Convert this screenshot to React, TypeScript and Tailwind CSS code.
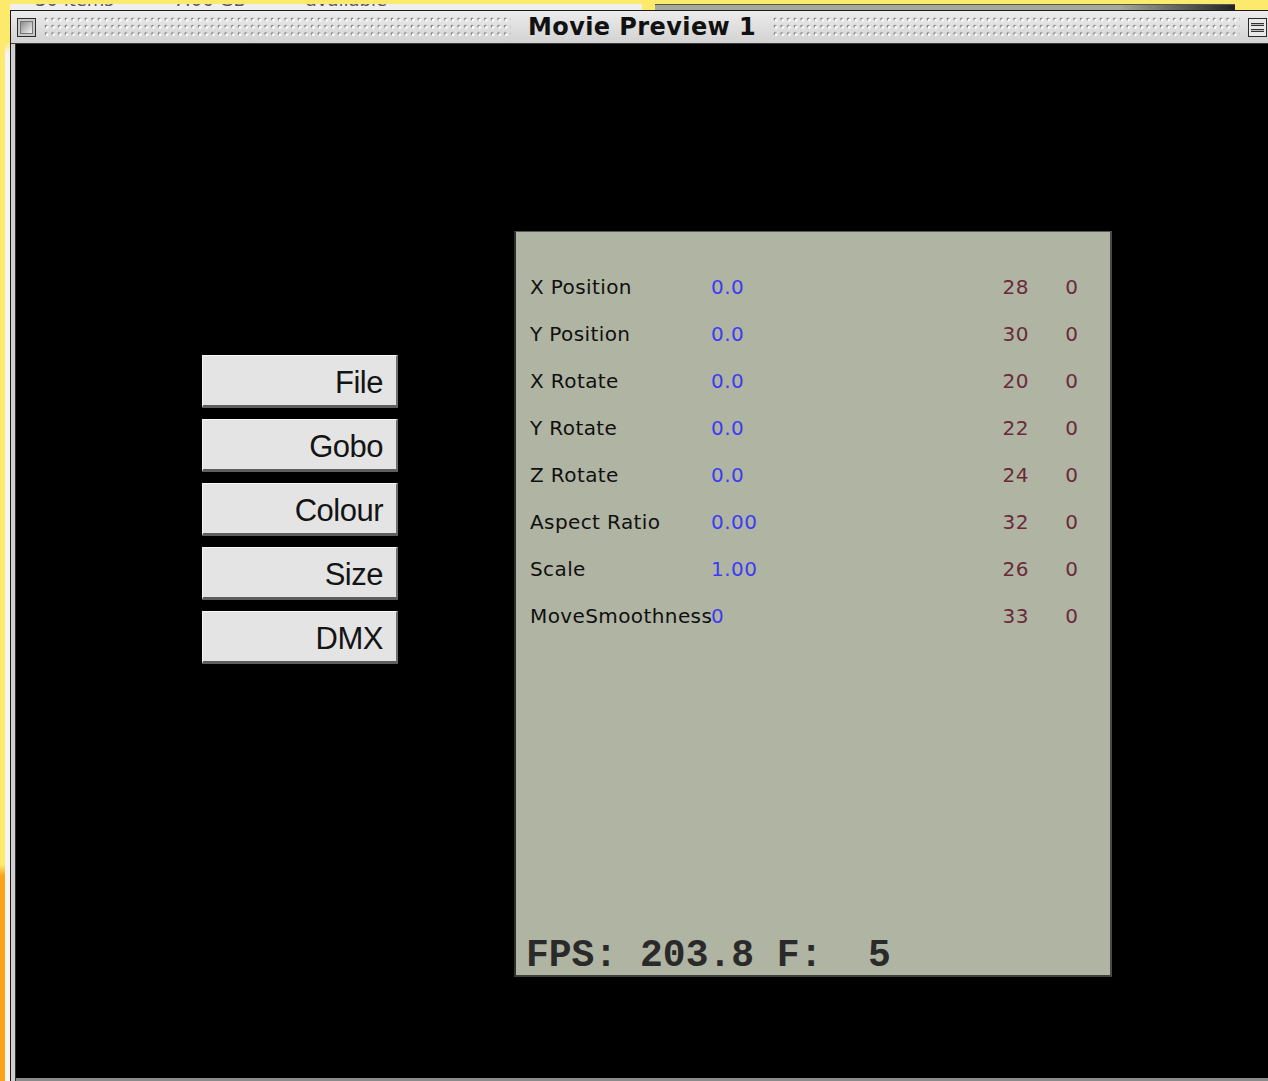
const params = [
  { label: "X Position", value: "0.0", channel: "28", level: "0" },
  { label: "Y Position", value: "0.0", channel: "30", level: "0" },
  { label: "X Rotate", value: "0.0", channel: "20", level: "0" },
  { label: "Y Rotate", value: "0.0", channel: "22", level: "0" },
  { label: "Z Rotate", value: "0.0", channel: "24", level: "0" },
  { label: "Aspect Ratio", value: "0.00", channel: "32", level: "0" },
  { label: "Scale", value: "1.00", channel: "26", level: "0" },
  { label: "MoveSmoothness", value: "0", channel: "33", level: "0" },
];

const menu = ["File", "Gobo", "Colour", "Size", "DMX"];

function Stripes() {
  return (
    <div className="flex-1 h-[21px] bg-[radial-gradient(circle_at_3px_3px,#ffffff_1.1px,transparent_1.7px),radial-gradient(circle_at_2px_2px,#7a7a7a_1.1px,transparent_1.7px)] bg-[length:6.67px_7.3px]" />
  );
}

function CloseBox() {
  return (
    <div className="w-[19px] h-[19px] border border-[#2a2a2a] bg-[#c8c8c8] p-[2px]">
      <div className="w-full h-full border border-[#777] bg-[linear-gradient(135deg,#8c8c8c,#f2f2f2)]" />
    </div>
  );
}

function ShadeBox() {
  return (
    <div className="w-[19px] h-[19px] border border-[#2a2a2a] bg-[#e8e8e8] flex flex-col justify-center gap-[3px] px-[2px]">
      <div className="h-[3px] border-y border-[#333] bg-[#bbb]" />
      <div className="h-[3px] border-y border-[#333] bg-[#bbb]" />
    </div>
  );
}

function MenuButton({ label }: { label: string }) {
  return (
    <div className="h-[53px] w-[196px] flex items-center justify-end pt-[4px] pr-[13px] bg-[#e4e4e4] border-t border-l border-[#f6f6f6] border-r-2 border-b-[3px] border-r-[#6e6e6e] border-b-[#5e5e5e] rounded-[1px] text-[31px] leading-none tracking-[-0.5px] text-[#141414] font-['Liberation_Sans',Arial,sans-serif]">
      {label}
    </div>
  );
}

export default function App() {
  return (
    <div className="w-[1268px] h-[1081px] overflow-hidden flex bg-[#fde96c]">
      {/* desktop edge behind the window */}
      <div className="w-[5px] shrink-0 bg-[linear-gradient(to_bottom,#fde96c_0,#fde96c_80%,#f9a21a_81%,#f9a21a_100%)]" />
      <div className="flex-1 flex flex-col min-w-0">
        <div className="h-[10px] shrink-0 flex items-end">
          <div className="w-[632px] h-[6px] bg-[#efefef] overflow-hidden ml-[5px]">
            <div className="-mt-[13px] pl-[25px] flex gap-[60px] text-[18px] leading-none text-[#555] font-['DejaVu_Sans',sans-serif]">
              <span>30 items</span>
              <span>7.06 GB</span>
              <span>available</span>
            </div>
          </div>
          <div className="w-[13px] h-[6px] bg-[#fde96c]" />
          <div className="w-[580px] h-[6px] border-t border-[#555] bg-[linear-gradient(to_right,#a4a999,#a4a999_80%,#222)]" />
        </div>
        <div className="flex-1 flex min-h-0">
          <div className="w-[5px] shrink-0 bg-[linear-gradient(to_bottom,#fde96c_0,#fde96c_3%,#f4f4f4_4%,#f4f4f4_100%)]" />
          {/* Movie Preview window */}
          <div className="w-[1270px] shrink-0 flex flex-col border-l border-t border-[#1a1a1a] bg-[#d4d4d4]">
            <div className="h-[33px] shrink-0 flex items-center pl-[6px] pr-[13px] gap-[8px] border-b border-[#3a3a3a] bg-[linear-gradient(to_bottom,#ececec,#d2d2d2)]">
              <CloseBox />
              <Stripes />
              <div className="px-[9px] text-[24px] leading-none font-bold tracking-[0.4px] text-[#111] font-['DejaVu_Sans',sans-serif]">
                Movie Preview 1
              </div>
              <Stripes />
              <ShadeBox />
            </div>
            <div className="flex-1 flex pl-[4px] bg-[#cfcfcf] min-h-0">
              <div className="flex-1 flex flex-col border-l border-[#333] min-h-0">
                <div className="flex-1 flex items-start bg-black">
                  <div className="ml-[186px] mt-[311px] flex flex-col gap-[11px]">
                    {menu.map((m) => (
                      <MenuButton key={m} label={m} />
                    ))}
                  </div>
                  {/* parameter panel */}
                  <div className="ml-[116px] mt-[187px] w-[598px] h-[746px] flex flex-col justify-between bg-[#b0b4a2] border-l-2 border-t border-r-2 border-b-2 border-l-[#2e2e2a] border-t-[#5a5a55] border-r-[#4a4a45] border-b-[#3e3e3a]">
                    <div className="pt-[31px] pl-[14px] pr-[32px] flex flex-col">
                      {params.map((p) => (
                        <div
                          key={p.label}
                          className="h-[47px] grid grid-cols-[181px_1fr_60px_49px] items-center text-[20px] leading-none font-['DejaVu_Sans',sans-serif]"
                        >
                          <span className="tracking-[0.4px] text-[#101010] whitespace-nowrap">{p.label}</span>
                          <span className="text-[#3c3cf5] tracking-[0.5px]">{p.value}</span>
                          <span className="text-right text-[#6a2a3a] tracking-[0.5px]">{p.channel}</span>
                          <span className="text-right text-[#6a2a3a]">{p.level}</span>
                        </div>
                      ))}
                    </div>
                    <div className="pl-[10px] pb-0 text-[38px] leading-none font-bold text-[#2a2a2a] whitespace-pre font-['Liberation_Mono','Courier_New',monospace]">
                      {"FPS: 203.8 F:  5"}
                    </div>
                  </div>
                </div>
                <div className="h-[3px] shrink-0 bg-[#8a8a8a]" />
              </div>
            </div>
          </div>
        </div>
      </div>
    </div>
  );
}
